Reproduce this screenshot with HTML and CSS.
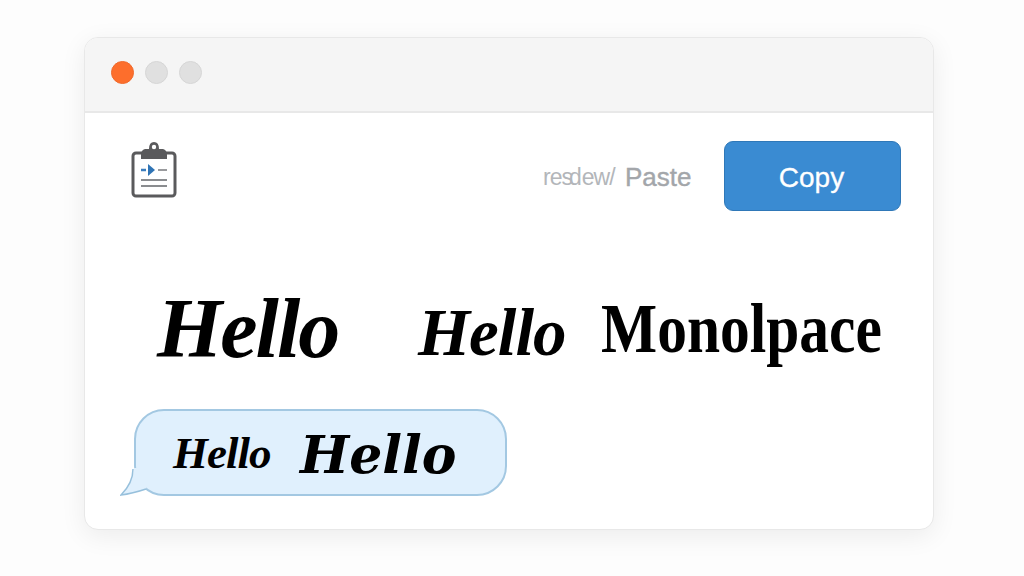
FILE: index.html
```html
<!DOCTYPE html>
<html lang="en">
<head>
    <meta charset="UTF-8">
    <meta name="viewport" content="width=device-width, initial-scale=1.0">
    <title>Font Preview</title>
    <link rel="stylesheet" href="styles.css">
</head>
<body>
    <div class="window">
        <div class="titlebar">
            <span class="dot dot-orange"></span>
            <span class="dot"></span>
            <span class="dot"></span>
        </div>
        <div class="content">
            <div class="toolbar">
                <svg class="clip-icon" width="46" height="58" viewBox="0 0 46 58">
                    <rect x="2" y="12" width="42" height="43" rx="3" fill="#fff" stroke="#5a5a5c" stroke-width="3"/>
                    <path d="M10 14 Q10 9 14 8 H18 Q18 1 23 1 Q28 1 28 8 H32 Q36 9 36 14 V18 H10 Z" fill="#5a5a5c"/>
                    <circle cx="23" cy="6" r="2.2" fill="#fff"/>
                    <path d="M10 29 H15" stroke="#3b7dbd" stroke-width="2.5"/>
                    <path d="M17 23 L24 29 L17 35 Z" fill="#2f74b5"/>
                    <path d="M27 29 H36" stroke="#77797c" stroke-width="1.5"/>
                    <path d="M10 39 H36 M10 45 H36" stroke="#8a8c8f" stroke-width="2"/>
                </svg>
                <div class="actions">
                    <span class="review">re<span class="squeeze">sd</span>ew/</span>
                    <span class="paste">Paste</span>
                    <button class="copy">Copy</button>
                </div>
            </div>
            <div class="samples">
                <span class="script-large">Hello</span>
                <span class="script-mid">Hello</span>
                <span class="gothic">Monolpace</span>
            </div>
            <div class="bubble">
                <svg class="tail" width="32" height="28" viewBox="0 0 32 28">
                    <path d="M14 0 C13 12 8 20 1 27 C10 26 18 24 26 21 L32 0 Z" fill="#e0f0fd"/>
                    <path d="M13 1 C13 12 8 20 1 27 C9 26 14 25 26 21" fill="none" stroke="#97c0dc" stroke-width="1.5"/>
                </svg>
                <span class="bubble-script">Hello</span>
                <span class="bubble-gothic">Hello</span>
            </div>
        </div>
    </div>
</body>
</html>
```

FILE: styles.css
```css
html, body {
    margin: 0;
    height: 100%;
}
body {
    background-color: #fdfdfd;
    font-family: "Liberation Sans", Arial, sans-serif;
    padding: 37px 90px 46px 84px;
    box-sizing: border-box;
    overflow: hidden;
}
.window {
    height: 493px;
    background-color: #fff;
    border-radius: 14px;
    border: 1px solid #e8e8e8;
    box-sizing: border-box;
    box-shadow: 0 6px 26px rgba(0, 0, 0, 0.07);
    overflow: hidden;
}
.titlebar {
    height: 75px;
    background-color: #f5f5f5;
    border-bottom: 2px solid #e8e8e8;
    box-sizing: border-box;
    display: flex;
    align-items: center;
    gap: 11px;
    padding-left: 26px;
    padding-bottom: 5px;
}
.dot {
    width: 23px;
    height: 23px;
    border-radius: 50%;
    background-color: #e0e0e0;
    border: 1px solid #d6d6d6;
    box-sizing: border-box;
}
.dot-orange {
    background-color: #fd6e2c;
    border-color: #f0692b;
}
.content {
    padding: 28px 32px 0 46px;
}
.toolbar {
    display: flex;
    justify-content: space-between;
    align-items: flex-start;
}
.actions {
    display: flex;
    align-items: center;
}
.review {
    font-size: 23px;
    color: #b3b6ba;
    letter-spacing: -1px;
    width: 71px;
    padding-top: 3px;
    white-space: nowrap;
}
.squeeze {
    letter-spacing: -4px;
    margin-right: 4px;
}
.paste {
    font-size: 26px;
    color: #a3a6aa;
    -webkit-text-stroke: 0.4px #a3a6aa;
    margin-left: 11px;
    width: 99px;
    padding-top: 3px;
}
.copy {
    width: 177px;
    height: 70px;
    background-color: #3a8bd2;
    border: 1px solid #2f78b8;
    border-radius: 9px;
    color: #fff;
    -webkit-text-stroke: 0.3px #fff;
    font-family: inherit;
    font-size: 28px;
    padding: 3px 2px 0 0;
}
.samples {
    display: flex;
    align-items: baseline;
    margin-top: 69px;
    height: 95px;
    padding-left: 26px;
    color: #000;
    white-space: nowrap;
}
.script-large {
    flex: none;
    font-family: "Liberation Serif", serif;
    font-style: italic;
    font-weight: bold;
    font-size: 84px;
    letter-spacing: -2px;
    width: 261px;
}
.script-mid {
    flex: none;
    font-family: "Liberation Serif", serif;
    font-style: italic;
    font-weight: bold;
    font-size: 67px;
    letter-spacing: -1px;
    width: 183px;
    transform: translateY(-2px);
}
.gothic {
    flex: none;
    font-family: "Liberation Serif", serif;
    font-weight: bold;
    font-size: 70px;
    transform-origin: left bottom;
    transform: translateY(-5px) scaleX(0.85);
}
.bubble {
    position: relative;
    width: 373px;
    height: 87px;
    margin: 34px 0 0 3px;
    background-color: #e0f0fd;
    border: 2px solid #a3c8e2;
    border-radius: 30px;
    box-sizing: border-box;
    display: flex;
    align-items: center;
    padding-left: 37px;
    white-space: nowrap;
    color: #000;
}
.tail {
    position: absolute;
    left: -16px;
    bottom: -2px;
}
.bubble-script {
    font-family: "Liberation Serif", serif;
    font-style: italic;
    font-weight: bold;
    font-size: 45px;
    letter-spacing: -1px;
    width: 127px;
}
.bubble-gothic {
    font-family: "DejaVu Serif", serif;
    font-style: italic;
    font-weight: bold;
    font-size: 52px;
    letter-spacing: 0;
    padding-top: 4px;
}
```
